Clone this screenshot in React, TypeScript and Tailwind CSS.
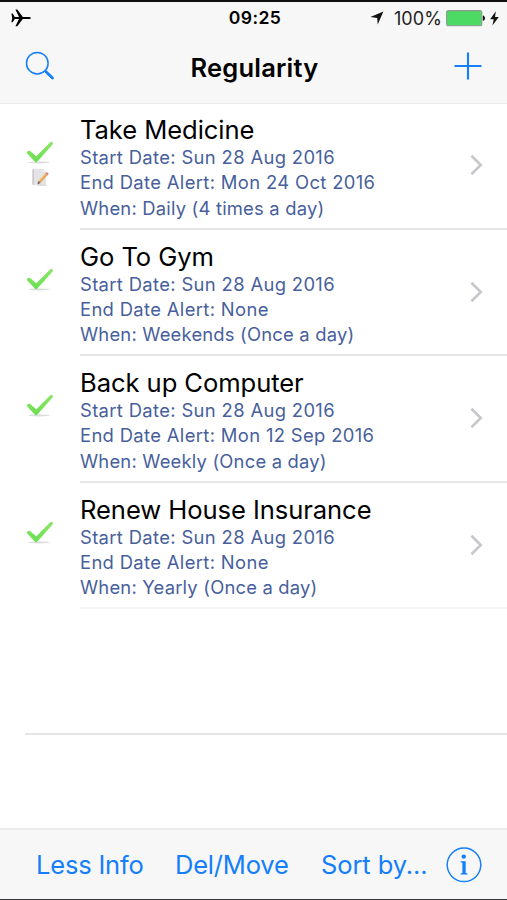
import React from "react";

interface Task {
  title: string;
  startDate: string;
  endDateAlert: string;
  when: string;
  hasNote?: boolean;
}

const tasks: Task[] = [
  {
    title: "Take Medicine",
    startDate: "Sun 28 Aug 2016",
    endDateAlert: "Mon 24 Oct 2016",
    when: "Daily (4 times a day)",
    hasNote: true,
  },
  {
    title: "Go To Gym",
    startDate: "Sun 28 Aug 2016",
    endDateAlert: "None",
    when: "Weekends (Once a day)",
  },
  {
    title: "Back up Computer",
    startDate: "Sun 28 Aug 2016",
    endDateAlert: "Mon 12 Sep 2016",
    when: "Weekly (Once a day)",
  },
  {
    title: "Renew House Insurance",
    startDate: "Sun 28 Aug 2016",
    endDateAlert: "None",
    when: "Yearly (Once a day)",
  },
];

const PlaneIcon = () => (
  <svg className="block" width="20" height="18" viewBox="0 0 20 18">
    <path
      d="M0.4 4.6H1.7L3.8 7.9H8L4.4 0.5H6.3L11.8 7.9H17.6C19.2 7.9 19.8 8.4 19.8 9S19.2 10.1 17.6 10.1H11.8L6.3 17.2H4.4L8 10.1H3.8L1.7 13.2H0.4L1.2 9Z"
      fill="#000"
    />
  </svg>
);

const LocationIcon = () => (
  <svg className="block" width="14" height="14" viewBox="0 0 14 14">
    <path d="M13.4 0.4L7.7 13.6L7.2 6.9L0.4 6.1Z" fill="#111" />
  </svg>
);

const BatteryIcon = () => (
  <svg className="block" width="40" height="17" viewBox="0 0 40 17">
    <rect x="0.6" y="0.6" width="35.2" height="15.2" rx="2" fill="#4cd964" stroke="#8f9b91" strokeWidth="1.1" />
    <path d="M36.8 5.6C38.3 5.9 39 7 39 8.2S38.3 10.5 36.8 10.8Z" fill="#111" />
  </svg>
);

const BoltIcon = () => (
  <svg className="block" width="9" height="15" viewBox="0 0 9 15">
    <path d="M5.8 0.2L0.2 8.2H3.8L2.4 14.6L8.8 5.9H5Z" fill="#111" />
  </svg>
);

const SearchIcon = () => (
  <svg className="block" width="30" height="30" viewBox="0 0 30 30" fill="none" stroke="#147efb">
    <circle cx="12.3" cy="12.2" r="10.8" strokeWidth="1.5" />
    <path d="M19.8 19.8L21.3 21.3" strokeWidth="1.6" />
    <path d="M21 20.8L27.5 27" strokeWidth="2.8" strokeLinecap="round" />
  </svg>
);

const PlusIcon = () => (
  <svg className="block" width="28" height="28" viewBox="0 0 28 28" stroke="#147efb" strokeWidth="2.1">
    <path d="M14 0.4V27.4M0.5 14H27.5" />
  </svg>
);

const CheckIcon = () => (
  <svg className="block" width="28" height="24" viewBox="0 0 28 24" fill="none">
    <defs>
      <linearGradient id="check" x1="0" y1="0" x2="0" y2="1">
        <stop offset="0" stopColor="#8be667" />
        <stop offset="1" stopColor="#69df50" />
      </linearGradient>
    </defs>
    <ellipse cx="13" cy="21.4" rx="10.5" ry="1" fill="#d9dcda" />
    <path
      d="M0.8 12.1C0.6 10.5 2.7 9 4 10L10.3 15.2L24.6 1C25.8 0.3 27.6 2 26.8 3.3L11.4 20.6C10.7 21.4 9.7 21.4 9 20.7Z"
      fill="url(#check)"
    />
  </svg>
);

const NoteIcon = () => (
  <svg className="block" width="19" height="19" viewBox="0 0 19 19">
    <path d="M1.8 1.2H12.4L14.4 3V16.6H1.8Z" fill="#e4e4e7" stroke="#d6d6d9" strokeWidth="0.6" />
    <path d="M2.2 1.5V16.5" stroke="#c8c8cc" strokeWidth="1.4" />
    <path d="M12 1.2V3.4H14.4" fill="#f7f7f7" />
    <path d="M7 17.2H15.6" stroke="#d0d0d3" strokeWidth="1" />
    <path d="M8.4 14.2L15.4 6.4" stroke="#e8a24c" strokeWidth="2.6" />
    <path d="M8 13.4L14.6 6" stroke="#f4cc88" strokeWidth="0.8" />
    <path d="M15.4 6.4L16.8 4.8" stroke="#dc7a74" strokeWidth="2.6" />
    <path d="M7.2 12.9L9.6 15L6.4 16.5Z" fill="#75645c" />
  </svg>
);

const ChevronIcon = () => (
  <svg className="block" width="14" height="22" viewBox="0 0 14 22" fill="none">
    <path d="M1.4 1.8L10.8 11L1.4 20.2" stroke="#c7c7cc" strokeWidth="2.6" />
  </svg>
);

const InfoIcon = () => (
  <svg className="block" width="36" height="36" viewBox="0 0 36 36">
    <circle cx="18" cy="17.8" r="16.8" fill="none" stroke="#147efb" strokeWidth="1.5" />
    <circle cx="17.8" cy="9.6" r="2.2" fill="#147efb" />
    <path d="M14.6 14.2H19.7V26L21.6 26.4V27.6H14.6V26.4L16.4 26V15.7L14.6 15.3Z" fill="#147efb" />
  </svg>
);

const TaskRow: React.FC<{ task: Task; last: boolean }> = ({ task, last }) => {
  return (
    <li className="flex h-[126.5px]">
      <div className="flex w-[80px] shrink-0 flex-col items-center pt-[38px]">
        <CheckIcon />
        {task.hasNote && (
          <div className="mt-[3px]">
            <NoteIcon />
          </div>
        )}
      </div>
      <div className={`flex flex-1 items-center justify-between border-b-2 pr-[23px] ${last ? "border-[#f5f5f5]" : "border-[#e6e6e8]"}`}>
        <div className="h-full whitespace-nowrap pt-3">
          <h2 className="text-[25.6px] leading-[30px] tracking-[-0.08px] text-black">{task.title}</h2>
          <div className="text-[18.4px] leading-[25.3px] tracking-[0.35px] text-[#485f9c]">
            <p>Start Date: {task.startDate}</p>
            <p>End Date Alert: {task.endDateAlert}</p>
            <p className="tracking-[0.2px]">When: {task.when}</p>
          </div>
        </div>
        <ChevronIcon />
      </div>
    </li>
  );
};

const App: React.FC = () => {
  return (
    <div className="flex h-[900px] w-[507px] flex-col overflow-hidden border-b border-t-2 border-b-[#3a3a3c] border-t-[#111] bg-white font-['Inter','Liberation_Sans',sans-serif]">
      <header className="h-[102px] shrink-0 border-b border-[#ebebec] bg-[#f7f7f7]">
        <div className="grid h-8 grid-cols-[1fr_auto_1fr] items-center pl-[11px] pr-2">
          <PlaneIcon />
          <span className="text-[17.6px] font-semibold tracking-[0.4px] text-black">09:25</span>
          <div className="flex items-center justify-end">
            <LocationIcon />
            <span className="ml-[10px] mr-1 text-[18px] tracking-[0.1px] text-[#222]">100%</span>
            <BatteryIcon />
            <span className="ml-1">
              <BoltIcon />
            </span>
          </div>
        </div>
        <div className="grid h-16 grid-cols-[1fr_auto_1fr] items-center pl-[25px] pr-[25px]">
          <SearchIcon />
          <h1 className="pl-0.5 pt-1 text-[25.5px] font-semibold tracking-[0.2px] text-black">Regularity</h1>
          <div className="flex justify-end">
            <PlusIcon />
          </div>
        </div>
      </header>

      <main className="-mt-px flex-1">
        <ul>
          {tasks.map((task, index) => (
            <TaskRow key={index} task={task} last={index === tasks.length - 1} />
          ))}
        </ul>
        <div className="ml-[25px] h-[126px] border-b-2 border-[#e4e4e6]" />
      </main>

      <footer className="flex h-[71px] shrink-0 items-center border-t-2 border-[#ebebec] bg-[#f7f7f7] pl-9 text-[25.5px] tracking-[-0.2px] text-[#147efb]">
        <button className="w-[139px] pt-0.5 text-left">Less Info</button>
        <button className="w-[146px] pt-0.5 text-left">Del/Move</button>
        <button className="w-[125px] pt-0.5 text-left tracking-[-0.1px]">Sort by...</button>
        <button>
          <InfoIcon />
        </button>
      </footer>
    </div>
  );
};

export default App;
